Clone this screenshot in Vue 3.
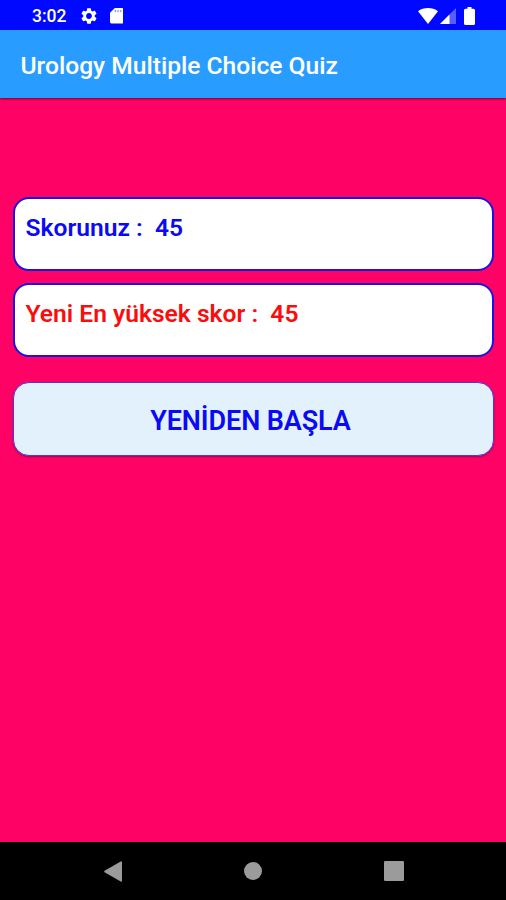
<template>
  <div class="screen">
    <div class="status-bar">
      <span class="status-bar__time">3:02</span>
      <svg class="status-bar__gear" viewBox="2 2 20 20">
        <path
          fill="#fff"
          d="M19.14 12.94c.04-.3.06-.61.06-.94 0-.32-.02-.64-.07-.94l2.03-1.58a.49.49 0 0 0 .12-.61l-1.92-3.32a.49.49 0 0 0-.59-.22l-2.39.96c-.5-.38-1.03-.7-1.62-.94l-.36-2.54a.48.48 0 0 0-.48-.41h-3.84c-.24 0-.43.17-.47.41l-.36 2.54c-.59.24-1.13.57-1.62.94l-2.39-.96c-.22-.08-.47 0-.59.22L2.74 8.87c-.12.21-.08.47.12.61l2.03 1.58c-.05.3-.09.63-.09.94s.02.64.07.94l-2.03 1.58a.49.49 0 0 0-.12.61l1.92 3.32c.12.22.37.29.59.22l2.39-.96c.5.38 1.03.7 1.62.94l.36 2.54c.05.24.24.41.48.41h3.84c.24 0 .44-.17.47-.41l.36-2.54c.59-.24 1.13-.56 1.62-.94l2.39.96c.22.08.47 0 .59-.22l1.92-3.32c.12-.22.07-.47-.12-.61l-2.01-1.58zM12 15.6A3.61 3.61 0 0 1 8.4 12c0-1.98 1.62-3.6 3.6-3.6s3.6 1.62 3.6 3.6-1.62 3.6-3.6 3.6z"
        />
      </svg>
      <svg class="status-bar__card" viewBox="0 0 14 16">
        <path fill="#fff" d="M5 0h7.5Q14 0 14 1.500V14.500Q14 16 12.500 16H1.500Q0 16 0 14.500V5z" />
        <path stroke="#0008ff" stroke-opacity=".4" stroke-width="1.500" d="M5.600 2v2.300M8.300 2v2.300M11 2v2.300" />
      </svg>
      <div class="status-bar__system">
        <svg class="status-bar__wifi" viewBox="0 0 20 16">
          <path fill="#fff" d="M0 3.200C5.500-1 14.500-1 20 3.200L10 16z" />
        </svg>
        <svg class="status-bar__signal" viewBox="0 0 16 16">
          <path fill="#fff" fill-opacity=".35" d="M0 16L16 0V16z" />
          <path fill="#fff" d="M0 16L9.500 6.500V16z" />
        </svg>
        <svg class="status-bar__battery" viewBox="0 0 11 18">
          <path fill="#fff" d="M3.500 0h4v1.700H9.500Q11 1.700 11 3.200V16.500Q11 18 9.500 18H1.500Q0 18 0 16.500V3.200Q0 1.700 1.500 1.700H3.500z" />
        </svg>
      </div>
    </div>

    <header class="app-bar">
      <h1 class="app-bar__title">Urology Multiple Choice Quiz</h1>
    </header>

    <main class="result">
      <div
        v-for="item in scores"
        :key="item.label"
        class="result__card"
        :class="`result__card--${item.kind}`"
      >{{ item.label }} :&nbsp; {{ item.value }}</div>
      <button type="button" class="result__restart" @click="restart">YENİDEN BAŞLA</button>
    </main>

    <nav class="nav-bar">
      <svg class="nav-bar__back" viewBox="0 0 18 21">
        <path fill="#9b9b9b" d="M.6 9.700L16.700.5Q18 0 18 1.300V19.700Q18 21 16.700 20.500L.6 11.300Q-.4 10.500.6 9.700z" />
      </svg>
      <svg class="nav-bar__home" viewBox="0 0 18 18">
        <circle cx="9" cy="9" r="9" fill="#9b9b9b" />
      </svg>
      <svg class="nav-bar__recent" viewBox="0 0 20 20">
        <rect width="20" height="20" rx="1.300" fill="#9b9b9b" />
      </svg>
    </nav>
  </div>
</template>

<script setup>
import { ref } from 'vue';

const scores = ref([
  { kind: 'current', label: 'Skorunuz', value: 45 },
  { kind: 'best', label: 'Yeni En yüksek skor', value: 45 },
]);

function restart() {
  scores.value[0].value = 0;
}
</script>

<style>
body {
  margin: 0;
}
</style>

<style scoped>
.screen {
  display: flex;
  flex-direction: column;
  width: 506px;
  height: 900px;
  overflow: hidden;
  background: #ff0266;
  font-family: Roboto, sans-serif;
}

.screen * {
  box-sizing: border-box;
}

.status-bar {
  display: flex;
  align-items: center;
  height: 29.5px;
  flex: none;
  padding: 2px 31px 0 32px;
  background: #0008ff;
  color: #fff;
}

.status-bar__time {
  width: 49px;
  font-size: 17.5px;
  font-weight: 500;
  line-height: 28px;
}

.status-bar__gear {
  width: 16px;
  height: 16px;
}

.status-bar__card {
  width: 13.5px;
  height: 15.5px;
  margin-left: 12.5px;
}

.status-bar__system {
  display: flex;
  align-items: center;
  margin-left: auto;
}

.status-bar__wifi {
  width: 20px;
  height: 16px;
}

.status-bar__signal {
  width: 16px;
  height: 16px;
  margin-left: 2px;
}

.status-bar__battery {
  width: 11px;
  height: 18px;
  margin-left: 8px;
}

.app-bar {
  display: flex;
  align-items: center;
  height: 68.5px;
  flex: none;
  padding: 3px 20.5px 0;
  background: #299dff;
  box-shadow: 0 1px 2px rgba(0, 0, 0, 0.6);
}

.app-bar__title {
  margin: 0;
  color: #fff;
  font-size: 24.6px;
  font-weight: 500;
  white-space: nowrap;
}

.result {
  display: flex;
  flex-direction: column;
  flex: 1;
  padding: 99px 12px 0 13px;
}

.result__card {
  height: 74px;
  margin-bottom: 12px;
  padding: 14px 10.5px;
  border: 2px solid #2010dc;
  border-radius: 16px;
  background: #fff;
  font-size: 24.6px;
  font-weight: 600;
  line-height: 29px;
  white-space: nowrap;
}

.result__card--current {
  color: #0a0af5;
}

.result__card--best {
  color: #f90d0d;
}

.result__restart {
  height: 74px;
  margin-top: 13px;
  padding: 3px 6px 0 0;
  border: 1.5px solid #4a3ae0;
  border-radius: 16px;
  background: #e3f1fc;
  box-shadow: 0 1px 2px rgba(0, 0, 0, 0.35);
  color: #0a0af5;
  font-family: inherit;
  font-size: 27px;
  font-weight: 600;
  letter-spacing: -0.1px;
}

.nav-bar {
  display: flex;
  align-items: center;
  justify-content: space-between;
  height: 58px;
  flex: none;
  padding: 0 102.5px 0 103.5px;
  background: #000;
}

.nav-bar__back {
  width: 18px;
  height: 21px;
}

.nav-bar__home {
  width: 18px;
  height: 18px;
  margin-left: 1px;
}

.nav-bar__recent {
  width: 20px;
  height: 20px;
}
</style>
